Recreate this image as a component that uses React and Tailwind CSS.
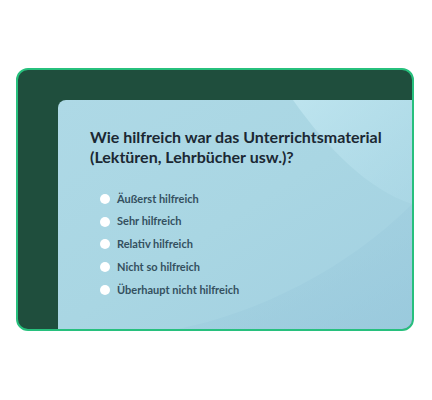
export default function App() {
  const options = [
    "Äußerst hilfreich",
    "Sehr hilfreich",
    "Relativ hilfreich",
    "Nicht so hilfreich",
    "Überhaupt nicht hilfreich",
  ];

  return (
    <div className="min-h-screen bg-white pt-[68px] pl-4" style={{ fontFamily: "Lato, 'Noto Sans', sans-serif" }}>
      <div className="w-[398px] h-[263px] rounded-[12px] border-2 border-[#27c07d] bg-[#1f4e3d] overflow-hidden pl-[40px] pt-[30px] flex">
        <div className="flex-1 relative rounded-tl-[8px] overflow-hidden bg-gradient-to-br from-[#aed9e6] via-[#a9d6e3] to-[#a2d0e1]">
          {/* background swoosh */}
          <svg className="absolute inset-0 w-full h-full" viewBox="0 0 354 231" preserveAspectRatio="none">
            <defs>
              <linearGradient id="sw" x1="0" y1="0" x2="1" y2="1">
                <stop offset="0" stopColor="#c2e7f1" stopOpacity="0.8" />
                <stop offset="1" stopColor="#b4dfec" stopOpacity="0.3" />
              </linearGradient>
              <linearGradient id="sw2" x1="0" y1="0" x2="1" y2="1">
                <stop offset="0" stopColor="#9bcadc" stopOpacity="0" />
                <stop offset="1" stopColor="#94c5da" stopOpacity="0.6" />
              </linearGradient>
            </defs>
            <path d="M235 0 C 270 50, 310 90, 354 105 L354 0 Z" fill="url(#sw)" />
            <path d="M120 231 C 200 215, 290 170, 354 105 L354 231 Z" fill="url(#sw2)" />
          </svg>

          <div className="relative pl-[32px] pt-[27px]">
            <h1 className="text-[16px] leading-[20px] font-bold text-[#1b2833]">
              Wie hilfreich war das Unterrichtsmaterial
              <br />
              (Lektüren, Lehrbücher usw.)?
            </h1>
            <ul className="mt-[25px] pl-[10px] flex flex-col gap-[8.7px]">
              {options.map((o) => (
                <li key={o} className="flex items-center gap-[7px] h-[14px]">
                  <span className="w-[10px] h-[10px] rounded-full bg-white" />
                  <span className="text-[11px] font-bold text-[#34505f]">{o}</span>
                </li>
              ))}
            </ul>
          </div>
        </div>
      </div>
    </div>
  );
}
